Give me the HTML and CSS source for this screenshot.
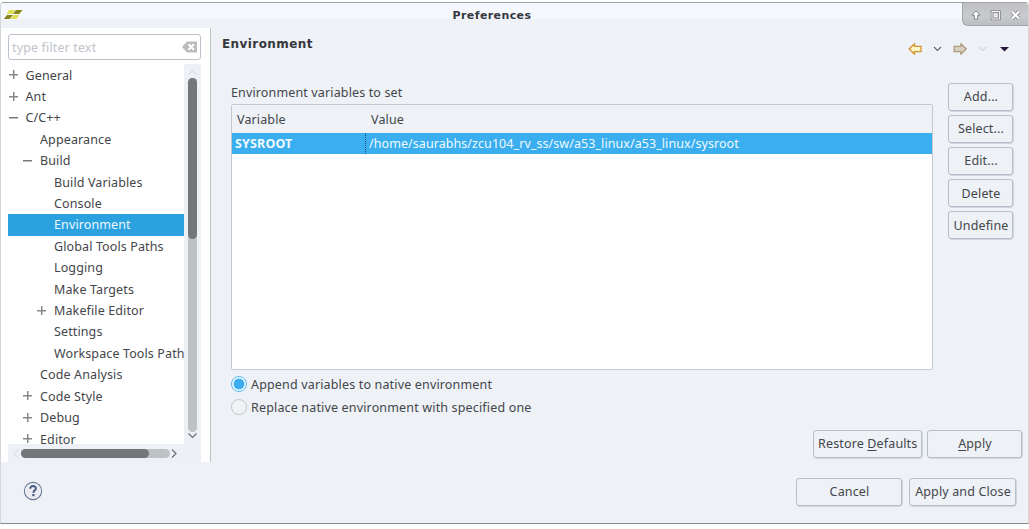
FILE: index.html
```html
<!DOCTYPE html>
<html lang="en">
<head>
<meta charset="utf-8">
<title>Preferences</title>
<link rel="stylesheet" href="styles.css">
</head>
<body>
<div class="window">
  <header class="titlebar">
    <svg class="logo" width="20" height="12" viewBox="0 0 20 12"><path fill="#dede55" d="M6 1h6.500l-3.200 4H3.500zM10.500 6h6l-3.200 4H7.500z"/><path fill="#85851c" d="M13 1h6.500l-3.200 4H10zM4 6h6L6.500 10H.8z"/></svg>
    <h1 class="title">Preferences</h1>
    <div class="window-controls">
      <svg width="66" height="23" viewBox="0 0 66 23" fill="none"><path d="M13 7.700l4.200 4.500h-2.600v3.900h-3.200v-3.900H8.800z" fill="#fff" stroke="#85868b"/><path d="M29 8.500h7.500v7.500H29z" stroke="#85868b" stroke-width="2.600"/><path d="M29 8.500h7.500v7.500H29z" stroke="#f4f4f6" stroke-width="1"/><path d="M31.500 11h2.500v2.500h-2.500z" stroke="#f4f4f6"/><path d="M49 8.500l7 7m0-7l-7 7" stroke="#85868b" stroke-width="3.800"/><path d="M49 8.500l7 7m0-7l-7 7" stroke="#fff" stroke-width="2.200"/></svg>
    </div>
  </header>
  <div class="content">
    <aside class="sidebar">
      <div class="filter"><span>type filter text</span>
        <svg width="15" height="12" viewBox="0 0 15 12"><path d="M0 6l5-5.500h10v11H5z" fill="#bbb"/><path d="M6.500 3.300l5.400 5.400m0-5.400L6.500 8.700" stroke="#fff" stroke-width="2"/></svg>
      </div>
      <div class="tree-box">
        <ul class="tree">
          <li class="l0 plus">General</li>
          <li class="l0 plus">Ant</li>
          <li class="l0 minus">C/C++</li>
          <li class="l1">Appearance</li>
          <li class="l1 minus">Build</li>
          <li class="l2">Build Variables</li>
          <li class="l2">Console</li>
          <li class="l2 selected">Environment</li>
          <li class="l2">Global Tools Paths</li>
          <li class="l2">Logging</li>
          <li class="l2">Make Targets</li>
          <li class="l2 plus">Makefile Editor</li>
          <li class="l2">Settings</li>
          <li class="l2">Workspace Tools Path</li>
          <li class="l1">Code Analysis</li>
          <li class="l1 plus">Code Style</li>
          <li class="l1 plus">Debug</li>
          <li class="l1 plus">Editor</li>
        </ul>
        <div class="vscroll">
          <svg width="9" height="14" viewBox="0 0 9 14" fill="none"><path d="M.5 10.500l4-4 4 4" stroke="#d2d5d9"/></svg>
          <div class="vtrack"><div class="vthumb"></div></div>
          <svg width="9" height="10" viewBox="0 0 9 10" fill="none"><path d="M.5 1.500l4 4 4-4" stroke="#66696c" stroke-width="1.100"/></svg>
        </div>
        <div class="hscroll">
          <svg width="13" height="9" viewBox="0 0 13 9" fill="none"><path d="M10 .5l-4 4 4 4" stroke="#d2d5d9"/></svg>
          <div class="htrack"><div class="hthumb"></div></div>
          <svg width="9" height="9" viewBox="0 0 9 9" fill="none"><path d="M2 .5l4 4-4 4" stroke="#66696c" stroke-width="1.100"/></svg>
        </div>
      </div>
    </aside>
    <main class="page">
      <div class="page-head">
        <h2 class="heading">Environment</h2>
        <svg class="nav" width="104" height="12" viewBox="0 0 104 12" fill="none"><path d="M1.200 6l5.300-5.200v2.500h6.500v5.400H6.500v2.500z" fill="#fff6c8" stroke="#d1942c" stroke-width="1.300"/><path d="M26 4l3.500 3.500L33 4" stroke="#666" stroke-width="1.100"/><path d="M58.200 6l-5.300-5.200v2.500H46.200v5.400h6.700v2.500z" fill="#d8d0c2" stroke="#b09b7c" stroke-width="1.300"/><path d="M71 4l3.500 3.500L78 4" stroke="#d4d6da" stroke-width="1.200"/><path d="M92 4h9l-4.500 4.500z" fill="#26173b"/></svg>
      </div>
      <div class="env">
        <div class="env-left">
          <div class="label">Environment variables to set</div>
          <div class="table">
            <div class="row head"><div>Variable</div><div>Value</div></div>
            <div class="row active"><div>SYSROOT</div><div>/home/saurabhs/zcu104_rv_ss/sw/a53_linux/a53_linux/sysroot</div></div>
          </div>
          <div class="radio"><i class="dot on"></i><span>Append variables to native environment</span></div>
          <div class="radio"><i class="dot"></i><span>Replace native environment with specified one</span></div>
        </div>
        <div class="side-buttons">
          <div class="btn">Add...</div>
          <div class="btn">Select...</div>
          <div class="btn">Edit...</div>
          <div class="btn">Delete</div>
          <div class="btn">Undefine</div>
        </div>
      </div>
      <div class="page-actions">
        <div class="btn restore"><span>Restore <u>D</u>efaults</span></div>
        <div class="btn apply"><span><u>A</u>pply</span></div>
      </div>
    </main>
  </div>
  <footer class="footer">
    <svg class="help" width="20" height="20" viewBox="0 0 20 20"><circle cx="10" cy="10" r="8.600" fill="#fafbfd" stroke="#647491" stroke-width="1.100"/><circle cx="10" cy="10" r="7.300" fill="#eaebf1"/><path d="M7.200 7.800c0-3.800 5.900-3.400 5.700-.3-.1 1.700-2.500 2-2.500 4.300" fill="none" stroke="#465b83" stroke-width="2"/><path d="M9.300 13h2.200v2.200H9.300z" fill="#465b83"/></svg>
    <div class="btn cancel">Cancel</div>
    <div class="btn close">Apply and Close</div>
  </footer>
</div>
</body>
</html>
```
FILE: styles.css
```css
* { box-sizing: border-box; }
body {
  margin: 0;
  height: 529px;
  overflow: hidden;
  background: #fff;
  color: #43464a;
  font: 12.5px/21px "Noto Sans", sans-serif;
  letter-spacing: 0.14px;
}
svg { display: block; flex: none; }
.window {
  margin-top: 2px;
  height: 522px;
  display: flex;
  flex-direction: column;
  background: #eef1f6;
  border: 1px solid #d2d7da;
  border-top: 1px solid #a1a3a6;
  border-bottom: 1px solid #858987;
  border-radius: 4px 4px 0 0;
  overflow: hidden;
}
.titlebar {
  height: 25px;
  display: grid;
  grid-template-columns: 66px 1fr 66px;
  align-items: start;
  background: linear-gradient(#f6f8ff 15px, #f7f1f5 16px, #eef1f6 17px);
}
.logo { margin: 6px 0 0 2px; }
.title {
  margin: 3px 0 0;
  padding-right: 45px;
  text-align: center;
  font: bold 11px/20px "DejaVu Sans", sans-serif;
  letter-spacing: 0.4px;
  color: #34373c;
}
.window-controls {
  height: 23px;
  border-bottom-left-radius: 6px;
  border: 1px solid #a4a5a9;
  border-width: 0 0 1px 1px;
  background: linear-gradient(#bfc0c4, #c9cace 60%, #bcbdc1);
}
.content { height: 434px; display: flex; }
.sidebar {
  width: 210px;
  padding: 6px 9px 0 7px;
  background: #fff;
  border-right: 1px solid #bfc1c3;
}
.filter {
  height: 26px;
  display: flex;
  align-items: center;
  justify-content: space-between;
  padding: 0 3px 0 3px;
  border: 1px solid #bcc3cd;
  border-radius: 3px;
  color: #c1c4cb;
  background: #fff;
}
.tree-box {
  margin-top: 4px;
  height: 398px;
  display: grid;
  grid-template-columns: 176px 17px;
  grid-template-rows: 380px 18px;
  background: #edf1f6;
}
.tree {
  margin: 0;
  padding: 0.4px 0 0;
  list-style: none;
  overflow: hidden;
  background: #fff;
}
.tree li {
  height: 21.41px;
  line-height: 23px;
  display: flex;
  align-items: center;
  white-space: nowrap;
  letter-spacing: 0.12px;
}
.tree li::before {
  content: "";
  flex: none;
  width: 9px;
  height: 9px;
  margin: -1px 8px 0 0;
}
.tree .l0 { padding-left: 1px; }
.tree .l0::before { margin-right: 7.5px; }
.l1 { padding-left: 15px; }
.l2 { padding-left: 29px; }
.plus::before {
  background:
    linear-gradient(#85878a, #85878a) 0 4px / 9px 1.5px no-repeat,
    linear-gradient(#85878a, #85878a) 4px 0 / 1.5px 9px no-repeat;
}
.minus::before { background: linear-gradient(#77797c, #77797c) 0 4px / 9px 1.5px no-repeat; }
.tree .selected { background: #2ba2df; color: #eef8ff; }
.vscroll { display: flex; flex-direction: column; align-items: center; }
.vtrack { width: 9px; height: 354px; border-radius: 5px; background: #bdc3c5; }
.vthumb { height: 161px; border-radius: 5px; background: #75767a; }
.hscroll { grid-column: 1 / 3; display: flex; align-items: center; }
.htrack { width: 149px; height: 9px; border-radius: 5px; background: #bdc3c5; }
.hthumb { width: 128px; height: 9px; border-radius: 5px; background: #75767a; }
.page { flex: 1; padding-right: 6px; }
.page-head {
  height: 55px;
  display: flex;
  justify-content: space-between;
  padding: 5px 10px 0 11px;
}
.heading {
  margin: 1px 0 0;
  font: bold 12px/21px "DejaVu Sans", sans-serif;
  letter-spacing: 0.42px;
  color: #34373c;
}
.nav { margin-top: 10px; }
.env {
  height: 347px;
  display: flex;
  justify-content: space-between;
  padding: 0 9px 0 20px;
}
.env-left { width: 702px; }
.label { height: 21px; line-height: 19px; }
.table {
  height: 266px;
  background: #fff;
  border: 1px solid #c4cacd;
  border-radius: 2px;
}
.row { display: grid; grid-template-columns: 134px 1fr; }
.head { height: 28px; line-height: 29px; background: #eef1f6; }
.head div { padding-left: 5px; }
.active { height: 21px; background: #3aaeef; color: #f0faff; }
.active div { padding-left: 3px; letter-spacing: 0.07px; }
.active div:first-child { font-weight: bold; letter-spacing: 0.15px; border-right: 1px dotted #17506f; }
.radio { height: 23px; display: flex; align-items: center; gap: 4px; padding-top: 5px; letter-spacing: 0.16px; }
.dot {
  width: 16px;
  height: 16px;
  border: 1px solid #c3c7ca;
  border-radius: 50%;
  background: #f1f3f6;
}
.on { border-color: #56b7ef; background: radial-gradient(circle, #3aaeef 5px, #f3faff 5.800px); }
.btn {
  height: 27.5px;
  display: flex;
  align-items: center;
  justify-content: center;
  padding-left: 1px;
  border: 1px solid #b5bfc8;
  border-radius: 3px;
  box-shadow: 0.500px 0.500px 0.500px #b6bac8;
  white-space: nowrap;
}
u { text-underline-offset: 2px; }
.side-buttons { width: 65px; display: flex; flex-direction: column; gap: 4.6px; }
.page-actions { display: flex; justify-content: flex-end; gap: 5px; }
.restore { width: 109.5px; }
.apply { width: 95px; }
.footer { flex: 1; display: flex; padding: 16px 12px 0 22px; gap: 7px; }
.help { margin: 3px auto 0 0; }
.cancel { width: 106px; }
.close { width: 107px; }
```
